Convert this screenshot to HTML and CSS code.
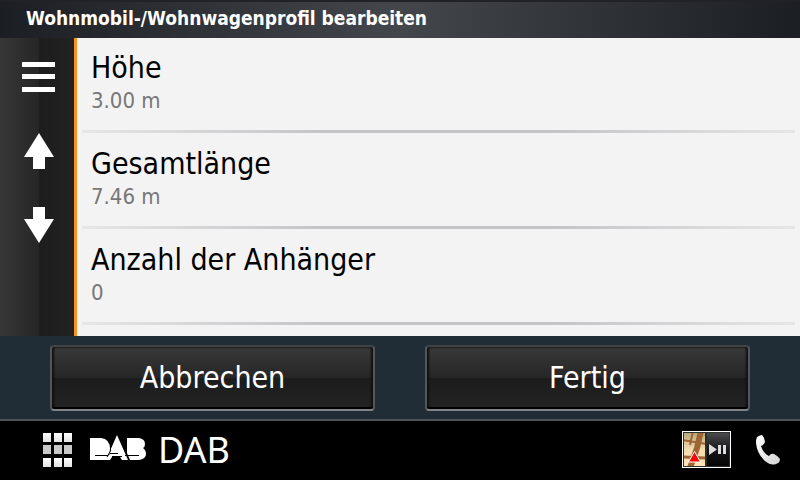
FILE: index.html
```
<!DOCTYPE html>
<html lang="de">

<head>
  <meta charset="UTF-8">
  <meta name="viewport" content="width=device-width, initial-scale=1.0">
  <title>Wohnmobil-/Wohnwagenprofil bearbeiten</title>
  <link rel="stylesheet" href="styles.css">
</head>

<body>
  <header class="title_bar">
    <h1>Wohnmobil-/Wohnwagenprofil bearbeiten</h1>
  </header>

  <main class="content">
    <nav class="side_bar">
      <button class="side_btn" type="button" aria-label="Menü">
        <svg width="33" height="30" viewBox="0 0 33 30" fill="#fff">
          <path d="M0 0h33v5H0zM0 12h33v5H0zM0 25h33v5H0z" />
        </svg>
      </button>
      <button class="side_btn" type="button" aria-label="Nach oben">
        <svg width="30" height="36" viewBox="0 0 30 36" fill="#fff">
          <path d="M15 0L30 24H21V36H9V24H0z" />
        </svg>
      </button>
      <button class="side_btn" type="button" aria-label="Nach unten">
        <svg width="30" height="36" viewBox="0 0 30 36" fill="#fff">
          <path d="M15 36L30 12H21V0H9V12H0z" />
        </svg>
      </button>
    </nav>

    <div class="list_wrap">
      <ul class="list">
        <li><button class="item" type="button">
          <span class="name">Höhe</span>
          <span class="value">3.00 m</span>
        </button></li>
        <li><button class="item" type="button">
          <span class="name">Gesamtlänge</span>
          <span class="value">7.46 m</span>
        </button></li>
        <li><button class="item" type="button">
          <span class="name">Anzahl der Anhänger</span>
          <span class="value">0</span>
        </button></li>
      </ul>
    </div>
  </main>

  <div class="actions">
    <button class="btn" type="button">Abbrechen</button>
    <button class="btn" type="button">Fertig</button>
  </div>

  <footer class="status_bar">
    <button class="icon_btn" type="button" aria-label="Apps">
      <svg width="30" height="34" viewBox="0 0 30 34">
        <defs>
          <linearGradient id="tile" x1="0" y1="0" x2="0" y2="1">
            <stop offset="0" stop-color="#fff" />
            <stop offset="1" stop-color="#e2e2e2" />
          </linearGradient>
        </defs>
        <g fill="url(#tile)">
          <path d="M0 0h8v9H0z" /><path d="M11 0h8v9h-8z" /><path d="M21 0h8v9h-8z" />
          <path d="M0 25h8v9H0z" /><path d="M11 25h8v9h-8z" /><path d="M21 25h8v9h-8z" />
        </g>
        <path fill="#c9c9c9" d="M0 12h8v9H0zM11 12h8v9h-8zM21 12h8v9h-8z" />
      </svg>
    </button>
    <button class="source" type="button">
      <svg width="56" height="30" viewBox="0 0 56 30" aria-hidden="true">
        <g fill="#fff">
          <path d="M0 3H11Q20 4 20 14Q20 20 17 25H0z" />
          <path d="M37 3H49Q55 4 55 9Q55 12 53 13Q56 15 56 19Q56 24 49 25H40L37 18z" />
          <path d="M27 0L38 25H32L30 22H22L20 25H16z" />
        </g>
        <path d="M20.500 12V16L17 22" fill="none" stroke="#000" />
        <path d="M5 20.500H18L20 18.500H28M22 21.500H32M35 20.500H49" fill="none" stroke="#000" />
      </svg>
      <span>DAB</span>
    </button>

    <button class="icon_btn media" type="button" aria-label="Karte und Medien">
      <svg width="49" height="37" viewBox="0 0 49 37">
        <defs>
          <linearGradient id="land" x1="0" y1="0" x2="0" y2="1">
            <stop offset="0" stop-color="#b9a67c" />
            <stop offset=".5" stop-color="#f3dcae" />
            <stop offset="1" stop-color="#ffe5b5" />
          </linearGradient>
          <linearGradient id="player" x1="0" y1="0" x2="0" y2="1">
            <stop offset="0" stop-color="#4b4b4d" />
            <stop offset=".5" stop-color="#17171a" />
            <stop offset="1" stop-color="#050505" />
          </linearGradient>
          <clipPath id="map_area"><path d="M2 2h21v33H2z" /></clipPath>
        </defs>
        <path fill="#fff" d="M0 0h49v37H0z" />
        <path fill="#2b302d" d="M1 1h47v35H1z" />
        <path fill="url(#land)" d="M2 2h21v33H2z" />
        <g clip-path="url(#map_area)" fill="none" stroke="#9d6535">
          <path d="M19 0L15 17L8 37" stroke-width="6" />
          <path d="M0 9L25 13M11 0L8 14" stroke-width="2" />
          <path d="M0 26L25 27" stroke-width="3" />
        </g>
        <path d="M12.500 20.500L18.500 31H6.500z" fill="#ff0006" stroke="#fff" />
        <path fill="url(#player)" d="M25 2h22v33H25z" />
        <path fill="#ddd" d="M27 13L35 18.500L27 24zM36 14h3v9h-3zM41 14h3v9h-3z" />
      </svg>
    </button>
    <button class="icon_btn" type="button" aria-label="Telefon">
      <svg width="24" height="30" viewBox="0 0 24 30">
        <defs>
          <linearGradient id="phone" x1="0" y1="0" x2="1" y2="1">
            <stop offset="0" stop-color="#fff" />
            <stop offset="1" stop-color="#d4d4d4" />
          </linearGradient>
        </defs>
        <path fill="url(#phone)" d="M1 2Q4 0 6 0Q9 3 9 7Q8 10 5 11Q7 18 13 21Q15 18 18 19Q22 21 24 24Q24 28 20 29Q15 31 9 26Q1 19 0 8Q0 4 1 2z" />
      </svg>
    </button>
  </footer>
</body>

</html>
```
FILE: styles.css
```
* {
  margin: 0;
  padding: 0;
  box-sizing: border-box;
}

body {
  display: flex;
  flex-direction: column;
  height: 100vh;
  background: #000;
  font-family: "DejaVu Sans Condensed", "DejaVu Sans", sans-serif;
  font-stretch: condensed;
  overflow: hidden;
}

button {
  border: 0;
  background: none;
  color: inherit;
  font: inherit;
  cursor: pointer;
}

svg {
  display: block;
}

.title_bar {
  flex: none;
  padding: 5px 26px 9px;
  border-top: 2px solid #202226;
  background: linear-gradient(to right, #1b1e22, #43464a 50%, #1b1e22);
  color: #fff;
}

.title_bar h1 {
  font-size: 19px;
  line-height: 22px;
}

.content {
  display: flex;
  flex: 1;
  min-height: 0;
}

.side_bar {
  display: flex;
  flex-direction: column;
  align-items: center;
  width: 77px;
  padding-top: 2px;
  border-right: 3px solid #f7931e;
  background: linear-gradient(to right, #373737, #262626 39px, #1d1d1d 39px, #222);
}

.side_btn {
  display: flex;
  align-items: center;
  justify-content: center;
  width: 100%;
  height: 74px;
  padding-left: 3px;
}

.list_wrap {
  flex: 1;
  background: #f3f3f3;
  overflow: hidden;
}

.list {
  margin-top: -1px;
  list-style: none;
}

.item {
  display: block;
  width: 100%;
  padding: 13px 14px 17px;
  background: linear-gradient(to right, #e6e6e7, #c3c3c6 35%, #c3c3c6 65%, #e6e6e7) center bottom / calc(100% - 10px) 3px no-repeat;
  text-align: left;
}

.name,
.value {
  display: block;
}

.name {
  font-size: 30px;
  line-height: 36px;
  color: #000;
}

.value {
  font-size: 22px;
  line-height: 30px;
  color: #777;
}

.actions {
  display: grid;
  grid-template-columns: 1fr 1fr;
  gap: 50px;
  padding: 9px 50px 8px;
  border-bottom: 2px solid #505356;
  background: #202d37;
}

.btn {
  height: 66px;
  border: 2px solid #55565a;
  border-top-color: #414246;
  border-bottom-color: #828387;
  border-radius: 4px;
  background: linear-gradient(#393939, #262626 50%, #1c1c1c 50%, #232323);
  box-shadow: inset 0 -2px #000, inset 2px 0 2px #111, inset -2px 0 2px #111;
  color: #fff;
  font-size: 30px;
  line-height: 36px;
}

.status_bar {
  display: flex;
  align-items: center;
  height: 59px;
  padding: 0 20px 2px 43px;
  color: #fff;
}

.source {
  display: flex;
  align-items: center;
  gap: 12px;
  margin-left: 17px;
  font-family: "Noto Sans", sans-serif;
  font-size: 36px;
  line-height: 44px;
}

.media {
  margin-left: auto;
  margin-right: 25px;
}
```
